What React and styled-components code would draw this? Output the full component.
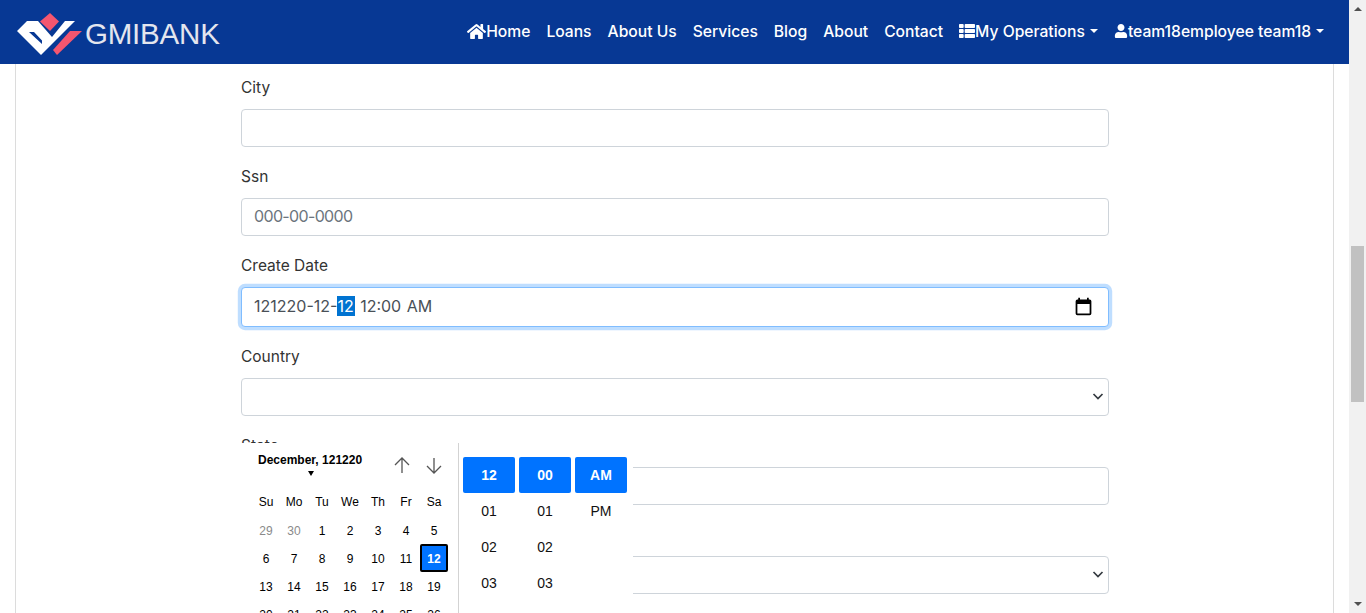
import React from 'react';
import styled, { createGlobalStyle } from 'styled-components';
import { FaHome, FaThList, FaUser } from 'react-icons/fa';

const FONT = `"Inter", "Liberation Sans", sans-serif`;
const CAL_FONT = `"Liberation Sans", Arial, sans-serif`;

const GlobalStyle = createGlobalStyle`
  html, body {
    margin: 0;
    height: 613px;
    overflow: hidden;
    background: #fff;
  }
  * { box-sizing: border-box; }
`;

const Page = styled.div`
  display: flex;
  width: 1366px;
  height: 613px;
  overflow: hidden;
  font-family: ${FONT};
`;

const Main = styled.div`
  position: relative;
  width: 1349px;
  height: 613px;
  overflow: hidden;
`;

const Navbar = styled.nav`
  height: 64px;
  background: #073894;
  display: flex;
  align-items: center;
  justify-content: space-between;
  padding: 0 16px;
`;

const Brand = styled.div`
  display: flex;
  align-items: center;
  gap: 1px;
  padding-top: 4px;
  color: #e4e6ee;
  font-family: "Liberation Sans", sans-serif;
  font-size: 29.5px;
  letter-spacing: -0.2px;
`;

const NavList = styled.div`
  display: flex;
  align-items: center;
  gap: 16px;
  padding-right: 9px;
  padding-bottom: 2px;
`;

const NavItem = styled.div`
  display: flex;
  align-items: center;
  color: #fff;
  font-size: 15.65px;
  font-weight: 500;
  white-space: nowrap;
`;

const Caret = styled.span`
  width: 0;
  height: 0;
  margin-left: 5px;
  border-top: 4.5px solid currentColor;
  border-left: 4.5px solid transparent;
  border-right: 4.5px solid transparent;
`;

const Card = styled.div`
  margin: 0 15px;
  height: 549px;
  border-left: 1px solid #dcdcdc;
  border-right: 1px solid #dcdcdc;
  padding: 10px 224px 0 225px;
`;

const Group = styled.div`
  margin-bottom: 16px;
`;

const Label = styled.div`
  color: #333;
  font-size: 15.5px;
  line-height: 27px;
  margin-bottom: 8px;
  height: 27px;
`;

const Field = styled.div`
  height: ${p => (p.$focus ? 40 : 38)}px;
  display: flex;
  align-items: center;
  justify-content: space-between;
  padding: 0 12px 2px;
  background: #fff;
  border-radius: 4px;
  border: 1px solid ${p => (p.$focus ? '#80bdff' : '#ced4da')};
  box-shadow: ${p => (p.$focus ? '0 0 0 3.2px rgba(0,123,255,.25)' : 'none')};
  color: #6c757d;
  font-size: 16px;
`;

const Placeholder = styled.span`
  letter-spacing: -0.65px;
`;

const Selected = styled.span`
  background: #0073d1;
  color: #fff;
  padding-right: 1px;
`;

const DateText = styled.span`
  color: #495057;
  word-spacing: 1px;
`;

const Popup = styled.div`
  position: absolute;
  left: 241px;
  top: 443px;
  width: 392px;
  height: 170px;
  background: #fff;
  display: flex;
  font-family: ${CAL_FONT};
  color: #000;
`;

const Calendar = styled.div`
  width: 218px;
  border-right: 1px solid #d3d3d3;
  padding: 10px 0 0 11px;
  overflow: hidden;
`;

const CalHead = styled.div`
  display: flex;
  justify-content: space-between;
  height: 34px;
  padding: 0 14px 0 6px;
`;

const Month = styled.div`
  font-size: 12px;
  font-weight: 700;
  line-height: 14px;
  white-space: nowrap;
`;

const MonthCaret = styled.div`
  width: 0;
  height: 0;
  margin: 4px 0 0 50px;
  border-top: 5px solid #000;
  border-left: 3.5px solid transparent;
  border-right: 3.5px solid transparent;
`;

const Arrows = styled.div`
  display: flex;
  gap: 12px;
  color: #555;
  padding-top: 2px;
`;

const Week = styled.div`
  display: grid;
  grid-template-columns: repeat(7, 28px);
  height: 28px;
  margin-bottom: ${p => (p.$head ? 1 : 0)}px;
  font-size: 12px;
`;

const Day = styled.div`
  width: 28px;
  height: 28px;
  padding-top: 1px;
  display: flex;
  align-items: center;
  justify-content: center;
  color: ${p => (p.$muted ? '#8a8a8a' : '#000')};
  ${p => p.$active && `
    background: #0073ff;
    color: #fff;
    font-weight: 700;
    border: 2px solid #000;
    border-radius: 2px;
  `}
`;

const Times = styled.div`
  display: flex;
  gap: 4px;
  padding: 14px 0 0 4px;
`;

const TimeCol = styled.div`
  width: 52px;
`;

const TimeCell = styled.div`
  height: 36px;
  display: flex;
  align-items: center;
  justify-content: center;
  font-size: 14px;
  border-radius: 2px;
  color: #111;
  ${p => p.$active && `
    background: #0073ff;
    color: #fff;
    font-weight: 700;
  `}
`;

const Scrollbar = styled.div`
  width: 17px;
  height: 613px;
  background: #f1f1f1;
  position: relative;
`;

const Thumb = styled.div`
  position: absolute;
  left: 2px;
  top: 246px;
  width: 13px;
  height: 156px;
  background: #c1c1c1;
`;

const ArrowUp = styled.div`
  position: absolute;
  left: 4.5px;
  top: 7px;
  width: 0;
  height: 0;
  border-bottom: 4px solid #505050;
  border-left: 4px solid transparent;
  border-right: 4px solid transparent;
`;

const ArrowDown = styled(ArrowUp)`
  top: auto;
  bottom: 7px;
  border-bottom: 0;
  border-top: 4px solid #505050;
`;

const Logo = () => (
  <svg width="68" height="44" viewBox="16 12 68 44">
    <path fill="#f4566f" d="M50 13 L59 21.5 L50 31 L40 21.5 Z" />
    <path fill="#f4566f" d="M82 31 L70 31 L53 50 L57 55 Z" />
    <path
      fill="#fff"
      fillRule="evenodd"
      d="M17 31 L27 21 L38 21 L52 37 L65 21 L75 21 L41 55 Z M29 32 L42 44 L42 40.5 L34 32 Z"
    />
  </svg>
);

const fields = [
  { label: 'City' },
  { label: 'Ssn', placeholder: '000-00-0000' },
  { label: 'Create Date', date: true },
  { label: 'Country', select: true },
  { label: 'State' },
  { label: 'User', select: true },
];

const weeks = [
  [29, 30, 1, 2, 3, 4, 5],
  [6, 7, 8, 9, 10, 11, 12],
  [13, 14, 15, 16, 17, 18, 19],
  [20, 21, 22, 23, 24, 25, 26],
];

const ChevronSvg = styled.svg`
  margin-right: -10px;
`;

const CalSvg = styled.svg`
  margin-right: 2px;
`;

const Chevron = () => (
  <ChevronSvg width="16" height="16" viewBox="0 0 16 16">
    <path d="M3.5 6 L8 10.5 L12.5 6" fill="none" stroke="#343a40" strokeWidth="1.7" />
  </ChevronSvg>
);

const CalIcon = () => (
  <CalSvg width="21" height="21" viewBox="0 0 24 24">
    <path fill="#000" d="M19 4h-1V2h-2v2H8V2H6v2H5a2 2 0 0 0-2 2v14a2 2 0 0 0 2 2h14a2 2 0 0 0 2-2V6a2 2 0 0 0-2-2zm0 16H5V9h14z" />
  </CalSvg>
);

export default function App() {
  return (
    <>
      <GlobalStyle />
      <Page>
        <Main>
          <Navbar>
            <Brand><Logo />GMIBANK</Brand>
            <NavList>
              <NavItem><FaHome size={19} />Home</NavItem>
              <NavItem>Loans</NavItem>
              <NavItem>About Us</NavItem>
              <NavItem>Services</NavItem>
              <NavItem>Blog</NavItem>
              <NavItem>About</NavItem>
              <NavItem>Contact</NavItem>
              <NavItem><FaThList size={16} />My Operations<Caret /></NavItem>
              <NavItem><FaUser size={14} />team18employee team18<Caret /></NavItem>
            </NavList>
          </Navbar>
          <Card>
            {fields.map(f => (
              <Group key={f.label}>
                <Label>{f.label}</Label>
                <Field $focus={f.date}>
                  {f.placeholder && <Placeholder>{f.placeholder}</Placeholder>}
                  {f.date && <DateText>121220-12-<Selected>12</Selected> 12:00 AM</DateText>}
                  {f.date && <CalIcon />}
                  {f.select && <span />}
                  {f.select && <Chevron />}
                </Field>
              </Group>
            ))}
          </Card>
          <Popup>
            <Calendar>
              <CalHead>
                <Month>December, 121220<MonthCaret /></Month>
                <Arrows>
                  <svg width="20" height="20" viewBox="0 0 20 20"><path d="M10 18V3M3 10l7-7 7 7" fill="none" stroke="currentColor" strokeWidth="1.3" /></svg>
                  <svg width="20" height="20" viewBox="0 0 20 20"><path d="M10 3v15M3 11l7 7 7-7" fill="none" stroke="currentColor" strokeWidth="1.3" /></svg>
                </Arrows>
              </CalHead>
              <Week $head>{['Su', 'Mo', 'Tu', 'We', 'Th', 'Fr', 'Sa'].map(d => <Day key={d}>{d}</Day>)}</Week>
              {weeks.map((w, i) => (
                <Week key={i}>
                  {w.map(d => <Day key={d} $muted={d > 28 && i === 0} $active={d === 12}>{d}</Day>)}
                </Week>
              ))}
            </Calendar>
            <Times>
              <TimeCol>
                <TimeCell $active>12</TimeCell><TimeCell>01</TimeCell><TimeCell>02</TimeCell><TimeCell>03</TimeCell>
              </TimeCol>
              <TimeCol>
                <TimeCell $active>00</TimeCell><TimeCell>01</TimeCell><TimeCell>02</TimeCell><TimeCell>03</TimeCell>
              </TimeCol>
              <TimeCol>
                <TimeCell $active>AM</TimeCell><TimeCell>PM</TimeCell>
              </TimeCol>
            </Times>
          </Popup>
        </Main>
        <Scrollbar>
          <ArrowUp />
          <Thumb />
          <ArrowDown />
        </Scrollbar>
      </Page>
    </>
  );
}
